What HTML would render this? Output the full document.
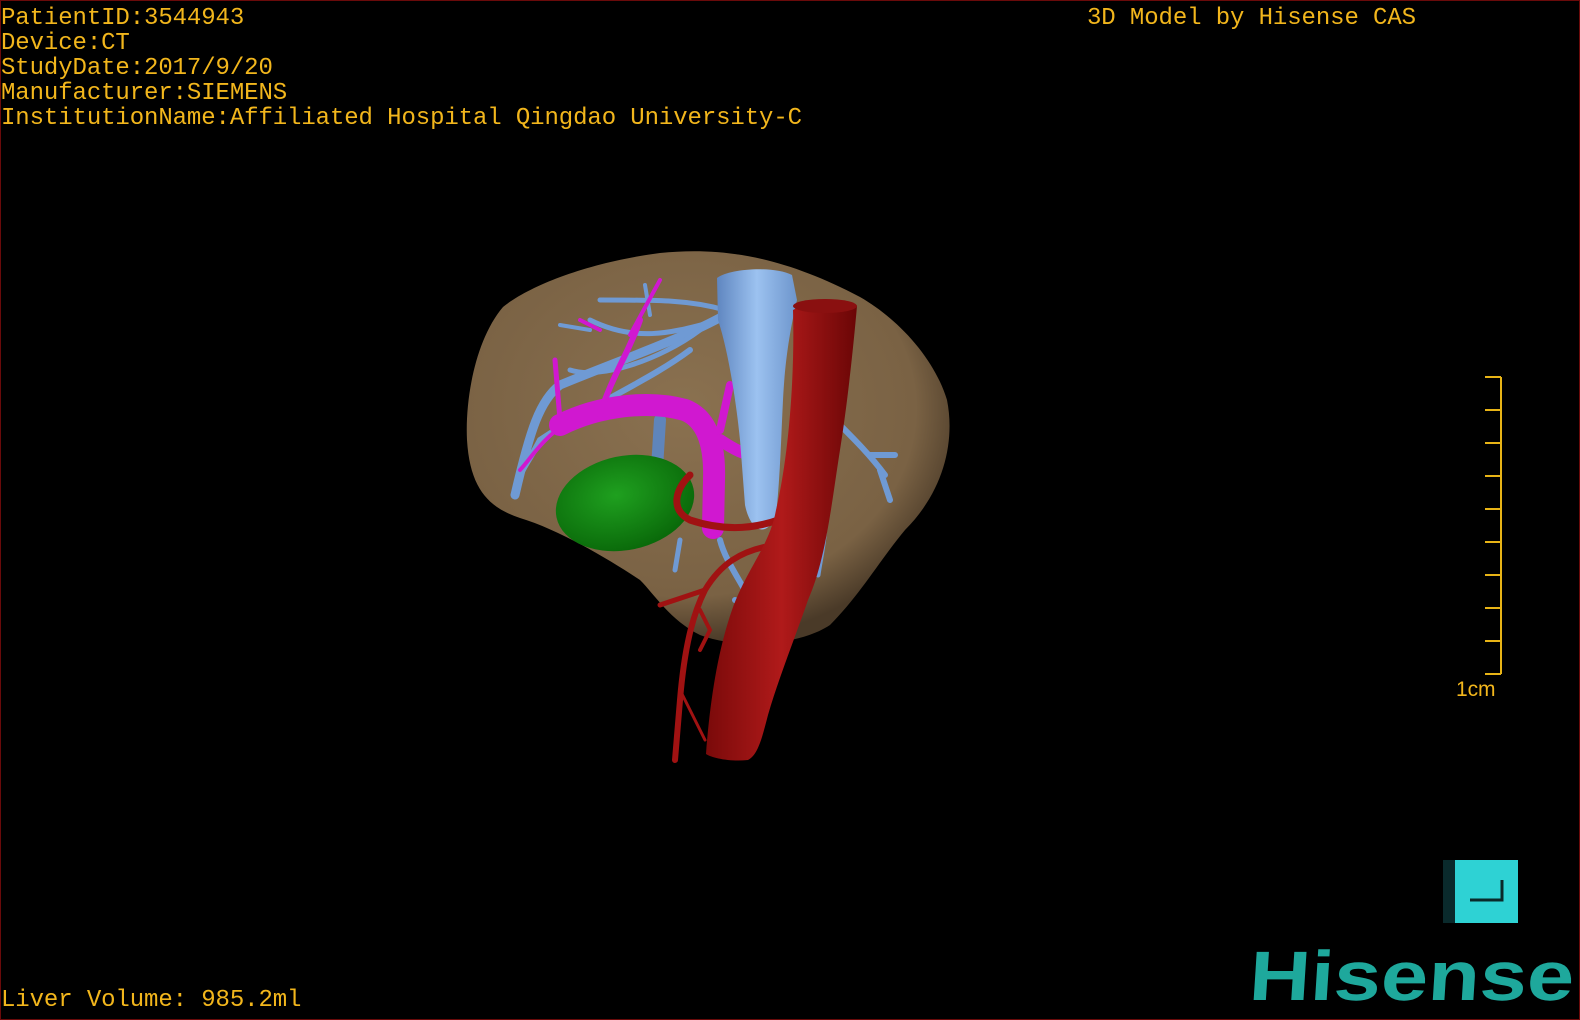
<!DOCTYPE html>
<html><head><meta charset="utf-8"><style>
html,body{margin:0;padding:0;background:#000;}
body{width:1580px;height:1020px;position:relative;overflow:hidden;}
.frame{position:absolute;left:0;top:0;width:1578px;height:1018px;border:1px solid #6a0a0a;}
.t{position:absolute;font-family:"Liberation Mono",monospace;font-size:24px;line-height:24px;color:#f2b61c;white-space:pre;letter-spacing:-0.1px;}
.logo{position:absolute;left:1252px;top:936px;font-family:"Liberation Sans",sans-serif;font-weight:bold;font-size:70px;line-height:80px;color:#1ea89c;transform-origin:0 0;transform:scaleX(1.21) skewX(-3deg);}
</style></head><body>
<div class="frame"></div>
<div class="t" style="left:1px;top:7px">PatientID:3544943</div>
<div class="t" style="left:1px;top:32px">Device:CT</div>
<div class="t" style="left:1px;top:57px">StudyDate:2017/9/20</div>
<div class="t" style="left:1px;top:82px">Manufacturer:SIEMENS</div>
<div class="t" style="left:1px;top:107px">InstitutionName:Affiliated Hospital Qingdao University-C</div>
<div class="t" style="left:1087px;top:7px">3D Model by Hisense CAS</div>
<div class="t" style="left:1px;top:989px">Liver Volume: 985.2ml</div>
<div class="t" style="left:1456px;top:678px;font-family:'Liberation Sans',sans-serif;font-size:21px">1cm</div>

<svg width="1580" height="1020" style="position:absolute;left:0;top:0">
<defs>
<radialGradient id="lv" cx="0.45" cy="0.4" r="0.6">
<stop offset="0" stop-color="#8a7150"/><stop offset="0.8" stop-color="#7a6244"/><stop offset="1" stop-color="#4a3a28"/>
</radialGradient>
<linearGradient id="ivc" x1="0" x2="1"><stop offset="0" stop-color="#5f86c0"/><stop offset="0.5" stop-color="#9cc2f0"/><stop offset="1" stop-color="#6d95cc"/></linearGradient>
<linearGradient id="ao" x1="0" x2="1"><stop offset="0" stop-color="#7a0a0a"/><stop offset="0.5" stop-color="#b01a1a"/><stop offset="1" stop-color="#6a0606"/></linearGradient>
<radialGradient id="gb" cx="0.45" cy="0.4" r="0.6"><stop offset="0" stop-color="#1fa01f"/><stop offset="1" stop-color="#0a6a0a"/></radialGradient>
</defs>
<path fill="url(#lv)" d="M503,307 C530,285 590,262 660,253 C720,247 780,255 860,297 C900,320 935,360 947,400 C955,440 945,490 905,530 C880,560 860,595 830,625 C800,645 740,650 700,635 C670,620 655,595 640,580 C610,560 560,530 520,518 C490,508 470,490 467,440 C465,400 475,340 503,307 Z"/>
<g stroke="#6f9ad4" stroke-linecap="round" fill="none">
<path d="M725,315 C680,340 620,360 560,385 C540,400 530,430 515,495" stroke-width="9"/>
<path d="M725,310 C690,300 660,300 600,300" stroke-width="5"/>
<path d="M720,320 C680,330 640,345 590,320" stroke-width="5"/>
<path d="M700,330 C660,360 600,380 570,370" stroke-width="5"/>
<path d="M690,350 C650,380 600,400 540,440 C530,460 520,470 515,490" stroke-width="6"/>
<path d="M660,420 L655,500" stroke-width="12" stroke="#5f85bb"/>
<path d="M650,315 L645,285" stroke-width="4"/>
<path d="M590,330 L560,325" stroke-width="4"/>
<path d="M840,425 C855,440 870,455 885,475 M870,455 L895,455 M880,470 L890,500" stroke-width="6"/>
<path d="M825,520 C825,540 820,560 818,575" stroke-width="5"/>
<path d="M720,540 C725,560 740,580 750,600 M735,600 L760,615" stroke-width="6"/>
<path d="M680,540 L675,570" stroke-width="5"/>
</g>
<g stroke="#d018d0" stroke-linecap="round" fill="none">
<path d="M560,425 C600,405 650,400 685,410 C710,420 715,450 714,480 L713,528" stroke-width="22"/>
<path d="M600,415 C610,380 630,350 640,320" stroke-width="6"/>
<path d="M630,335 L660,280" stroke-width="4"/>
<path d="M560,420 L555,360" stroke-width="5"/>
<path d="M570,420 C540,440 530,460 520,470" stroke-width="4"/>
<path d="M600,330 L580,320" stroke-width="4"/>
<path d="M720,430 L730,385" stroke-width="8"/>
<path d="M720,440 C735,450 745,455 755,455" stroke-width="12"/>
</g>
<path fill="url(#ivc)" d="M717,278 C730,268 775,266 792,275 L797,300 C790,330 785,360 783,400 C781,440 780,480 776,515 C766,540 750,530 745,505 L740,440 C736,400 728,350 718,320 Z"/>
<ellipse cx="625" cy="503" rx="70" ry="47" transform="rotate(-12 625 503)" fill="url(#gb)"/>
<g stroke="#a01212" stroke-linecap="round" fill="none">
<path d="M778,520 C750,530 720,530 690,520 C670,510 675,490 690,475" stroke-width="7"/>
<path d="M775,545 C740,550 720,565 705,590 C695,610 685,640 680,700 L675,760" stroke-width="6"/>
<path d="M705,590 L660,605" stroke-width="5"/>
<path d="M700,610 L710,630 L700,650" stroke-width="4"/>
<path d="M680,690 L705,740" stroke-width="3"/>
</g>
<path fill="url(#ao)" d="M793,310 C810,300 840,300 857,306 C854,340 848,400 840,450 C832,500 826,560 808,600 C796,635 778,680 768,715 C762,738 758,755 748,760 C730,762 712,758 706,754 C710,700 718,650 732,610 C746,570 770,545 776,510 C788,460 795,380 793,310 Z"/>
<ellipse cx="825" cy="306" rx="32" ry="7" fill="#8a1010"/>
<g stroke="#e8b416" stroke-width="2" fill="none">
<path d="M1501,377 V674"/>
<path d="M1485,377H1501M1485,410H1501M1485,443H1501M1485,476H1501M1485,509H1501M1485,542H1501M1485,575H1501M1485,608H1501M1485,641H1501M1485,674H1501"/>
</g>
<rect x="1443" y="860" width="12" height="63" fill="#0a2a2c"/>
<rect x="1455" y="860" width="63" height="63" fill="#2ed2d4"/>
<path d="M1470,900 H1502 V880" stroke="#0a2a2a" stroke-width="3" fill="none"/>
</svg>
<div class="logo">Hisense</div>
</body></html>
